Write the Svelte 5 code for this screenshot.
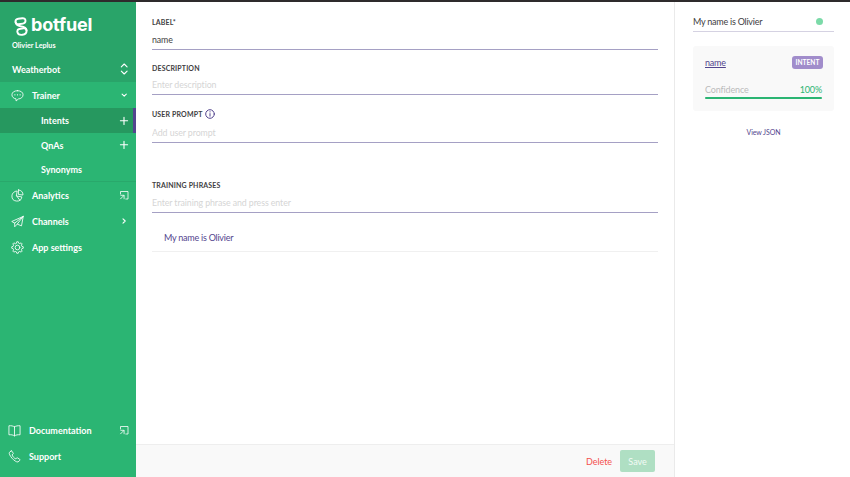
<script>
  const subs = [
    { label: 'Intents', add: true, active: true },
    { label: 'QnAs', add: true },
    { label: 'Synonyms' }
  ];
  const links = [
    { label: 'Analytics', icon: 'pie', end: 'external' },
    { label: 'Channels', icon: 'plane', end: 'right' },
    { label: 'App settings', icon: 'gear' }
  ];
  const footer = [
    { label: 'Documentation', icon: 'book', end: 'external' },
    { label: 'Support', icon: 'phone' }
  ];
  const phrases = ['My name is Olivier'];
  let confidence = 100;
</script>

{#snippet icon(name)}
  <svg class="icon" viewBox="0 0 14 14">
    {#if name === 'chat'}
      <path d="M7 1.800c3.500 0 6 1.800 6 4.400s-2.500 4.500-5 4.500L5.500 12.900l-.1-2.300C2.700 10.200 1 8.500 1 6.200c0-2.600 2.500-4.400 6-4.400z" />
      <path class="dots" d="M4.200 6.300h.01M7 6.300h.01M9.800 6.300h.01" />
    {:else if name === 'pie'}
      <path d="M6.200 2.200a5.400 5.400 0 1 0 5.500 6.300L6.200 7.600zM8 1v4.900l4.900.6C13.100 3.400 11 1.200 8 1zM6.200 7.600l3.400 4.600" />
    {:else if name === 'plane'}
      <path d="M13.200 1.500.8 7l3.200 1.700L13.200 1.500l-1.900 10.200-4.600-1.900L13.200 1.500M4 8.700v4l2.700-2.900" />
    {:else if name === 'gear'}
      <circle cx="7" cy="7" r="2.500" />
      <path d="M5.800 2.300 6.200.8h1.600l.4 1.500 1.300.5 1.400-.8 1.100 1.100-.8 1.400.5 1.300 1.500.4v1.600l-1.500.4-.5 1.300.8 1.400-1.100 1.100-1.400-.8-1.300.5-.4 1.500H6.200l-.4-1.500-1.300-.5-1.400.8L2 10.900l.8-1.400-.5-1.300-1.500-.4V6.200l1.500-.4.5-1.300L2 3.100 3.100 2l1.400.8z" />
    {:else if name === 'book'}
      <path d="M7 3.100C5.400 2 3.400 1.700 1 1.900v9.700c2.400-.2 4.400.1 6 1.200 1.600-1.100 3.600-1.400 6-1.200V1.900C10.600 1.700 8.600 2 7 3.100zv9.700" />
    {:else if name === 'phone'}
      <path d="M3.300 1.100 1.500 2.600C.1 4.900 7.300 13.400 10.800 12.900l2-1.800c.3-.4.2-.8-.1-1L10.300 8.500c-.4-.3-.8-.2-1.100.1l-.8 1C7 9.200 4.700 6.700 4.400 5.200l1-.8c.3-.3.4-.6.2-1L4.300 1.300c-.3-.4-.6-.4-1-.2z" />
    {/if}
  </svg>
{/snippet}

{#snippet ending(name)}
  <svg class="end" viewBox="0 0 10 12">
    {#if name === 'external'}
      <path class="thin" d="M1.500 5V2.500h7.500v7.500H6.800M1.600 9.800l3.200-3.200M1.800 6.300h3.300v3.500" />
    {:else if name === 'right'}
      <path d="M4 3.900 6.200 6 4 8.100" />
    {:else if name === 'down'}
      <path d="M3.100 5.200 5.200 7.200 7.300 5.200" />
    {:else if name === 'plus'}
      <path d="M5 2.200v7.200M1.400 5.800h7.200" />
    {:else if name === 'sort'}
      <path d="M2.300 3.800 5.200 1l2.900 2.800M2.300 8.200 5.200 11l2.900-2.800" />
    {/if}
  </svg>
{/snippet}

<div class="app">
  <nav>
    <header>
      <div class="logo">
        <svg viewBox="0 0 14 19">
          <path d="M4.200 1.700 8.300 1.200C10.300 1 11.500 2.200 11.500 3.800c0 1.600-1 2.600-2.600 2.800L4.400 7.200C2.700 7.400 1.500 6.200 1.500 4.600c0-1.600 1-2.700 2.700-2.900z" />
          <path d="M1.600 5.200C2 8.200 3.800 8.700 6.600 9.200c3.300.5 5.900 1.500 5.900 4.300" />
          <path d="M5.200 12 9.300 11.400c1.900-.3 3.300.7 3.300 2.400 0 2.100-1.800 3.700-4.200 4-2.400.3-4.600-.7-5-2.700-.3-1.700.3-2.800 1.800-3.100z" />
        </svg>
        <span>botfuel</span>
      </div>
      <div class="owner">Olivier Leplus</div>
      <div class="bot"><span>Weatherbot</span>{@render ending('sort')}</div>
    </header>
    <div class="row">{@render icon('chat')}<span>Trainer</span>{@render ending('down')}</div>
    <div class="subs">
      {#each subs as s}
        <div class="sub" class:active={s.active}>
          <span>{s.label}</span>
          {#if s.add}{@render ending('plus')}{/if}
        </div>
      {/each}
    </div>
    {#each links as l}
      <div class="row">{@render icon(l.icon)}<span>{l.label}</span>{#if l.end}{@render ending(l.end)}{/if}</div>
    {/each}
    <div class="bottom">
      {#each footer as l}
        <div class="row">{@render icon(l.icon)}<span>{l.label}</span>{#if l.end}{@render ending(l.end)}{/if}</div>
      {/each}
    </div>
  </nav>

  <main>
    <form>
      <div class="field first">
        <label for="label">LABEL*</label>
        <input id="label" value="name" />
      </div>
      <div class="field desc">
        <label for="desc">DESCRIPTION</label>
        <input id="desc" placeholder="Enter description" />
      </div>
      <div class="field prompt">
        <label for="prompt">USER PROMPT
          <svg class="info" viewBox="0 0 10 10"><circle cx="5" cy="5" r="4.300" /><path d="M5 4.600v2.600M5 2.700v.3" /></svg>
        </label>
        <input id="prompt" placeholder="Add user prompt" />
      </div>
      <div class="field training">
        <label for="training">TRAINING PHRASES</label>
        <input id="training" placeholder="Enter training phrase and press enter" />
      </div>
      {#each phrases as p}
        <div class="phrase">{p}</div>
      {/each}
    </form>
    <footer>
      <button type="button" class="delete">Delete</button>
      <button type="button" class="save">Save</button>
    </footer>
  </main>

  <aside>
    <div class="query"><span>My name is Olivier</span><i></i></div>
    <section class="card">
      <div class="match"><a href="#name">name</a><b>INTENT</b></div>
      <div class="confidence"><span>Confidence</span><em>{confidence}%</em></div>
      <div class="track"><div class="fill" style="width: {confidence}%"></div></div>
    </section>
    <div class="json">View JSON</div>
  </aside>
</div>

<style>
  :global(body) { margin: 0; overflow: hidden; }
  .app, .app * { box-sizing: border-box; }
  .app {
    display: flex;
    width: 850px;
    height: 477px;
    border-top: 2px solid #2e2b2c;
    background: #fff;
    font-family: Lato, sans-serif;
    font-size: 9px;
    color: #414042;
  }
  svg { fill: none; stroke: currentColor; stroke-linecap: round; stroke-linejoin: round; flex: none; }

  nav { width: 136px; display: flex; flex-direction: column; background: #2bb573; color: #fff; font-weight: 700; }
  header { height: 80px; background: #29a469; padding: 14px 7px 0 12px; }
  .logo { display: flex; align-items: center; height: 20px; padding-left: 2px; }
  .logo svg { width: 14px; height: 19px; stroke-width: 1.900; }
  .logo span { font: 700 18px/20px Inter, sans-serif; margin: -2px 0 0 3px; letter-spacing: -0.150px; }
  .owner { font-size: 7.200px; line-height: 10px; margin-top: 5px; }
  .bot { display: flex; align-items: center; justify-content: space-between; height: 20px; margin-top: 8px; }
  .row { display: flex; align-items: center; height: 26px; padding: 0 7px 0 11px; }
  .row span { margin-left: 8px; }
  .icon { width: 13px; height: 13px; stroke-width: 0.900; }
  .dots { stroke-width: 1.400; }
  .end { width: 10px; height: 12px; margin-left: auto; stroke-width: 1.100; }
  .thin { stroke-width: 0.800; }
  .subs { height: 74px; border-bottom: 1px solid #29a86b; }
  .sub { display: flex; align-items: center; height: 24px; padding: 0 7px 0 41px; }
  .sub.active { height: 25px; background: #26985f; border-right: 3px solid #53458e; padding-right: 4px; }
  .sub:not(.active) { height: 24.500px; }
  .bottom { margin-top: auto; padding-bottom: 8px; }
  .bottom .row { padding-left: 8px; }

  main { width: 539px; display: flex; flex-direction: column; border-right: 1px solid #eaeaea; }
  form { flex: 1; padding: 15px 16px 0; }
  .field { display: flex; flex-direction: column; }
  .field label { display: flex; align-items: center; height: 10px; font-size: 7px; font-weight: 700; letter-spacing: 0.150px; }
  input {
    width: 100%; height: 23px; padding: 2px 0 0; border: 0; border-bottom: 1px solid #a5a0c4;
    background: none; font: 400 8.800px Lato, sans-serif; letter-spacing: -0.080px; color: #414042; outline: 0;
  }
  input::placeholder { color: #d5d5d5; opacity: 1; }
  .desc { margin-top: 13px; }
  .desc input { height: 22px; }
  .prompt { margin-top: 13px; }
  .prompt label { height: 11px; }
  .prompt input { height: 24px; padding-top: 4px; letter-spacing: -0.080px; }
  .training { margin-top: 37px; }
  .info { width: 10px; height: 10px; margin-left: 3px; color: #53458e; }
  .phrase { height: 39px; padding: 12px 12px 0; line-height: 26px; letter-spacing: -0.240px; color: #53458e; border-bottom: 1px solid #f0f0f0; }
  footer { height: 33px; display: flex; align-items: center; justify-content: flex-end; gap: 8px; padding-right: 19px; border-top: 1px solid #eee; background: #f9f9f9; }
  button { border: 0; padding: 0; background: none; font: 400 9px Lato, sans-serif; letter-spacing: -0.050px; }
  .delete { color: #f4514e; }
  .save { width: 35px; height: 22px; border-radius: 2px; background: #afdfc3; color: #f3fbf6; }

  aside { flex: 1; padding: 13px 16px 0 18px; }
  .query { display: flex; align-items: center; justify-content: space-between; height: 17px; padding-right: 11px; padding-bottom: 4px; letter-spacing: -0.240px; border-bottom: 1px solid #d5d2e2; }
  .query i { width: 7px; height: 7px; border-radius: 50%; background: #7bdaa8; }
  .card { margin-top: 14px; height: 65px; padding: 10px 12px 0; border-radius: 3px; background: #f9f9f9; }
  .match, .confidence { display: flex; align-items: center; justify-content: space-between; }
  .match { height: 13px; }
  a { color: #53458e; text-decoration: underline; letter-spacing: -0.200px; }
  b { width: 31px; height: 13px; margin-right: -1px; border-radius: 3px; background: #a18dcb; color: #fff; font-size: 6.600px; line-height: 13px; text-align: center; letter-spacing: 0; }
  .confidence { height: 12px; margin-top: 14px; color: #bbb; letter-spacing: -0.150px; }
  em { font-style: normal; color: #2bb573; }
  .track { height: 2px; margin-top: 2px; border-radius: 1px; background: #e5e5e5; }
  .fill { height: 2px; border-radius: 1px; background: #2bb573; }
  .json { margin-top: 16px; text-align: center; font-size: 7px; line-height: 10px; letter-spacing: -0.080px; color: #53458e; }
</style>
